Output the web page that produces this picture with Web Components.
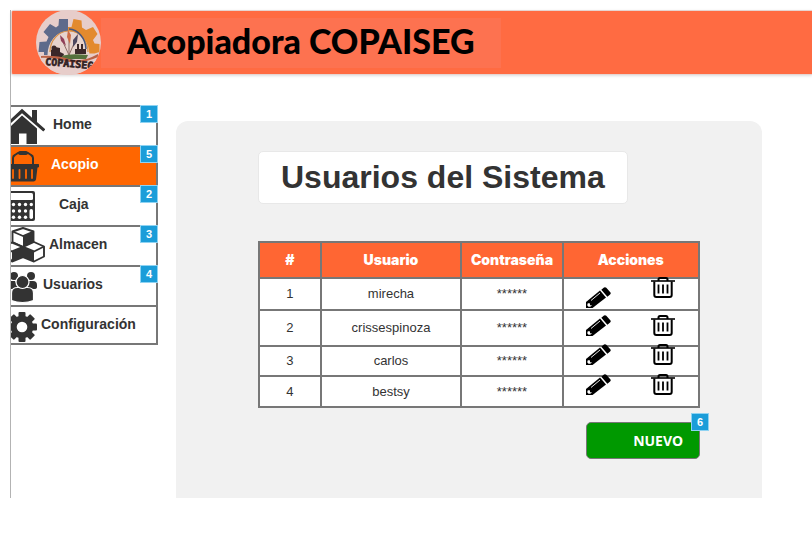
<!DOCTYPE html>
<html lang="es">
<head>
<meta charset="utf-8">
<title>Acopiadora COPAISEG</title>
<style>
  body { margin: 0; background: #fff; color: #333; font-family: "Liberation Sans", Arial, sans-serif; }
</style>
</head>
<body>
<copaiseg-app></copaiseg-app>

<script>
const define = (name, html, setup) => {
  const template = document.createElement('template');
  template.innerHTML = html;
  customElements.define(name, class extends HTMLElement {
    connectedCallback() {
      if (this.shadowRoot) return;
      this.attachShadow({ mode: 'open' }).append(template.content.cloneNode(true));
      if (setup) setup(this, this.shadowRoot);
    }
  });
};

const ICONS = {
  home: [34, `<g fill="#333"><path d="M-1 13 11 1.8l10 9V3h5v12l8.300 7.300-2 2.200L11 6.200-1 17z"/><path d="M0 19 11 8.500 26 21.500V37H15.500V26.500H8V37H0z"/></g>`],
  basket: [28, `<g fill="none" stroke="#333"><path d="M2 18v-7q0-2 2-3l3-2h10l3 2q2 1 2 3v7" stroke-width="2"/><path d="M9 6h6" stroke-width="4" stroke-linecap="round"/></g><path d="M-2 17h29q1.500 0 1.500 1.500T27 20.500h-.5L25 32.500q-.5 2-2.500 2H-1z" fill="#333"/><path d="M2 23v8M8.500 23v8M15 23v8M21 23v8" stroke="#f60" stroke-width="1.800" stroke-linecap="round"/>`],
  calculator: [24, `<path d="M0 4h22q2 0 2 2v26q0 2-2 2H0z" fill="#333"/><path d="M0 6h20.500q1.500 0 1.500 1.500v4q0 1.500-1.500 1.500H0z" fill="#fff"/><g fill="#fff"><circle cx="2.500" cy="17.500" r="1.700"/><circle cx="8.500" cy="17.500" r="1.700"/><circle cx="14.500" cy="17.500" r="1.700"/><circle cx="20.300" cy="17.500" r="1.700"/><circle cx="2.500" cy="24" r="1.700"/><circle cx="8.500" cy="24" r="1.700"/><circle cx="14.500" cy="24" r="1.700"/><circle cx="2.500" cy="30.200" r="1.700"/><circle cx="8.500" cy="30.200" r="1.700"/><circle cx="14.500" cy="30.200" r="1.700"/><rect x="18.500" y="22" width="3.500" height="10" rx="1.700"/></g>`],
  boxes: [34, `<g stroke="#333" stroke-width="1.900" stroke-linejoin="round" fill="#fff"><path d="M1.500 4.500 12 1l10.500 3.500v10L12 20 1.500 15z"/><path d="M-9.500 20 1 15.500 12 20v10L1 34.500z"/><path d="M12 20l11-5 10 4.500v10L23 34.500 12 30z"/><path d="M1.500 4.500 12 9l10.500-4.500M-9.500 20 1 24.500 12 20M12 20l11 4.500 10-5" fill="none"/></g><path d="M12 9l10.500-4.500v10L12 20z" fill="#333"/><path d="M1 24.500 12 20v10L1 34.500z" fill="#333"/><path d="M12 20l11 4.500v10L12 30z" fill="#333"/>`],
  users: [28, `<g fill="#333"><circle cx="3" cy="9" r="4"/><circle cx="20" cy="9" r="4"/><path d="M-4 22v-4q0-4 4-4h4l5 8zM16 14h6q4 0 4 4v2q0 2-3 2h-7z"/></g><g fill="#333" stroke="#fff" stroke-width="1.200"><path d="M.5 33.500V26q0-5.500 6-5.500h10q6 0 6 5.500v7.500q-5 2-11 2t-11-2z"/><circle cx="11.500" cy="15" r="6.500"/></g>`],
  gear: [26, `<g transform="translate(11 20)" fill="#333"><rect x="-3.500" y="-15" width="7" height="30" rx="1"/><rect x="-15" y="-3.500" width="30" height="7" rx="1"/><g transform="rotate(45)"><rect x="-3.500" y="-15" width="7" height="30" rx="1"/><rect x="-15" y="-3.500" width="30" height="7" rx="1"/></g><circle r="11.300"/><circle r="5.300" fill="#fff"/></g>`]
};

define('count-badge', `
<style>
  :host { display: block; box-sizing: border-box; width: 18px; height: 18px; border: 1px solid #8fd3f2;
    background: #1b9dd9; color: #fff; font: bold 11px/16px "Liberation Sans", Arial, sans-serif; text-align: center; }
</style><slot></slot>`);

define('brand-logo', `
<style>:host { display: block; width: 65px; height: 65px; flex: none; } svg { display: block; width: 100%; height: 100%; }</style>
<svg viewBox="0 0 65 65" role="img" aria-label="Logo">
  <defs><clipPath id="disc"><circle cx="32.500" cy="32.500" r="32.500"/></clipPath></defs>
  <g clip-path="url(#disc)">
    <rect width="65" height="65" fill="#e7cdca"/>
    <path d="M32 9v36H8V42H2.500l1-10 7-.5 2-4.500-5-5 6.500-8 6 3.500 2.500-2 .5-6.500z" fill="#5e6a8b"/>
    <path d="M32 17h3.500l2-8 8 1.500.5 7 4 2.500 7-3 4.500 7-4.500 6 1.500 3.500 5 .5v8l-5 1.500H32z" fill="#e38a2e"/>
    <path d="M11.500 45a21 24 0 0 1 42 0z" fill="#e7d3cd"/>
    <path d="M14 42a19 21 0 0 1 38 0" fill="none" stroke="#d99045" stroke-width="1.200"/>
    <path d="M33 19a18 21 0 0 1 17 20" fill="none" stroke="#46557c" stroke-width="1.500"/>
    <path d="M33 45 25 28M33 45V26M33 45l7-16" stroke="#8d6c65" stroke-width="1"/>
    <path d="M24 25l4 4 2 7-5-5z" fill="#913f58"/><path d="M32 20l3 5-1 9-3-7z" fill="#cf6c43"/><path d="M42 24l-1 8-4 5 0-7z" fill="#4d475f"/>
    <path d="M15 40l4-3 5 1v4l4 2-1 3-12 1z" fill="#3a2729"/><circle cx="18" cy="38" r="2.500" fill="#3a2729"/>
    <path d="M39 44v-5h2v-5h2v5h2v-5h2v5h3v5z" fill="#3a2729"/>
    <path d="M26 46q8-3 26-1l-2 4-24 0z" fill="#55713d"/>
    <path d="M5 46q15-1 28 3t29-5v3q-15 7-29 5T5 48z" fill="#bb6245"/>
    <path d="M2 48q16-1 30 4t31-5v20H2z" fill="#e7cdca"/>
    <text x="9" y="55" transform="rotate(5 9 55)" font-family="DejaVu Sans Mono, monospace" font-weight="bold" font-size="10" fill="#302022" stroke="#302022" stroke-width=".6">COPAISEG</text>
  </g>
</svg>`);

define('app-header', `
<style>
  :host { display: flex; align-items: center; height: 65px; background: linear-gradient(#ff6b42, #ff6b42) 0 1px / 100% 63px no-repeat #e6d5d2;
    border-left: 1px solid #e9cfc9; border-radius: 3px 0 0 3px; box-shadow: 0 1px 3px #0002; }
  brand-logo { margin-left: 24px; }
  h1 { box-sizing: border-box; width: 400px; margin: 0; padding: 0 0 4px 26px; background: #fd7250; color: #000;
    font: 900 34px/46px Lato, sans-serif; white-space: nowrap; }
</style>
<brand-logo></brand-logo><h1><slot></slot></h1>`);

define('nav-item', `
<style>
  :host { display: block; position: relative; border: solid #777; border-width: 2px 2px 0 0; }
  :host([last]) { border-bottom-width: 2px; }
  a { display: flex; height: 38px; color: #333; font: bold 14px/34px "Liberation Sans", Arial, sans-serif; text-decoration: none; }
  :host([last]) a { height: 36px; }
  :host([active]) a { background: #f60; color: #fff; }
  svg { flex: none; height: 38px; overflow: hidden; }
  :host([gap="s"]) a { gap: 4px; } :host([gap="m"]) a { gap: 8px; }
  :host([gap="l"]) a { gap: 12px; } :host([gap="xl"]) a { gap: 24px; }
  count-badge { position: absolute; top: -2px; right: -2px; }
</style>
<a href="#"><svg aria-hidden="true"></svg><slot></slot></a>`, (host, root) => {
  const [width, art] = ICONS[host.getAttribute('icon')];
  const svg = root.querySelector('svg');
  svg.setAttribute('width', width);
  svg.setAttribute('viewBox', `0 0 ${width} 38`);
  svg.innerHTML = art;
  if (host.hasAttribute('count')) {
    const badge = document.createElement('count-badge');
    badge.textContent = host.getAttribute('count');
    root.append(badge);
  }
});

define('side-nav', `
<style>:host { display: block; flex: none; width: 147px; }</style>
<nav><slot></slot></nav>`);

define('pencil-button', `
<style>:host { display: block; } button { display: block; padding: 0; border: 0; background: none; } svg { display: block; }</style>
<button type="button" aria-label="Editar"><svg width="25" height="21" viewBox="0 0 25 21">
  <path d="M0 21v-6L14 3.500l6 7L6.500 21z"/><path d="M15.300 2.700 18 .6q1.200-1 2.300.2l4 4.500q1 1.200-.2 2.200l-2.700 2.200z"/>
  <path d="M1.800 16.200l2 .1.300 2 2 .2-2 1.300H2.500l-1.300-1.500z" fill="#fff"/><path d="M5 13.500 14 6" stroke="#fff" stroke-width=".9"/>
</svg></button>`);

define('trash-button', `
<style>:host { display: block; } button { display: block; padding: 0; border: 0; background: none; } svg { display: block; }</style>
<button type="button" aria-label="Eliminar"><svg width="24" height="21" viewBox="0 0 24 21" fill="none" stroke="#000" stroke-width="2">
  <path d="M0 4h24" stroke-width="1.600"/><path d="M7.500 4V2.500Q7.500 1 9 1h6q1.500 0 1.500 1.500V4"/>
  <path d="M3.300 4.500V18q0 2 2 2h13.400q2 0 2-2V4.500"/><path d="M7.500 7.500v9M12 7.500v9M16.500 7.500v9" stroke-width="1.800"/>
</svg></button>`);

define('user-table', `
<style>
  :host { display: block; }
  table { width: 100%; border-collapse: collapse; table-layout: fixed; background: #fff; }
  th, td { box-sizing: border-box; padding: 0; border: 2px solid #777; text-align: center; }
  th { height: 36px; background: #f63; color: #fff; font: 900 14px/16px Inter, sans-serif; }
  td { font-size: 13px; line-height: 16px; }
  .n { width: 14%; } .u { width: 32%; } .p { width: 23%; } .a { width: 31%; }
  .tall td { height: 36px; } .mid td { height: 32px; } .low td { height: 30px; }
  .low:last-child td { height: 31px; }
  .actions { position: relative; }
  /* the action icons lie over the row borders */
  pencil-button, trash-button { position: absolute; top: -3px; }
  pencil-button { left: 17%; } trash-button { right: 17%; }
  .tall pencil-button, .tall trash-button { top: 4px; }
  .mid pencil-button { top: 8px; }
  .mid trash-button { top: -2px; }
</style>
<table>
  <thead><tr><th class="n">#</th><th class="u">Usuario</th><th class="p">Contraseña</th><th class="a">Acciones</th></tr></thead>
  <tbody></tbody>
</table>`, (host, root) => {
  const rows = [['mirecha', 'mid'], ['crissespinoza', 'tall'], ['carlos', 'low'], ['bestsy', 'low']];
  root.querySelector('tbody').innerHTML = rows.map(([name, size], i) =>
    `<tr class="${size}"><td>${i + 1}</td><td>${name}</td><td>******</td><td class="actions"><pencil-button></pencil-button><trash-button></trash-button></td></tr>`).join('');
});

define('new-button', `
<style>
  :host { display: block; position: relative; width: 114px; }
  button { display: block; width: 100%; height: 37px; padding: 0 16px; border: 1px solid #777; border-radius: 5px; background: #090;
    color: #fff; font: bold 14px/35px "Noto Sans", sans-serif; text-align: right; }
  count-badge { position: absolute; top: -9px; right: -9px; }
</style>
<button type="button"><slot></slot></button><count-badge>6</count-badge>`);

define('content-panel', `
<style>
  :host { display: flex; flex-direction: column; flex: 1; box-sizing: border-box; padding: 30px 62px 39px 82px;
    border-radius: 12px 12px 0 0; background: #f1f1f1; }
  h2 { align-self: flex-start; margin: 0 0 37px; padding: 0 22px; border: 1px solid #e8e8e8; border-radius: 5px;
    background: #fff; font-size: 32px; line-height: 51px; white-space: nowrap; }
  new-button { align-self: flex-end; margin-top: 14px; }
</style>
<h2>Usuarios del Sistema</h2><user-table></user-table><new-button>NUEVO</new-button>`);

define('copaiseg-app', `
<style>
  :host { display: flex; flex-direction: column; box-sizing: border-box; min-height: calc(100vh - 65px); margin: 10px 0 55px 10px;
    border-left: 1px solid #b3b3b3; }
  main { display: flex; flex: 1; gap: 18px; padding-right: 50px; }
  side-nav { margin-top: 30px; }
  content-panel { margin-top: 46px; }
</style>
<app-header>Acopiadora COPAISEG</app-header>
<main>
  <side-nav>
    <nav-item icon="home" gap="m" count="1">Home</nav-item>
    <nav-item icon="basket" gap="l" count="5" active>Acopio</nav-item>
    <nav-item icon="calculator" gap="xl" count="2">Caja</nav-item>
    <nav-item icon="boxes" gap="s" count="3">Almacen</nav-item>
    <nav-item icon="users" gap="s" count="4">Usuarios</nav-item>
    <nav-item icon="gear" gap="s" last>Configuración</nav-item>
  </side-nav>
  <content-panel></content-panel>
</main>`);
</script>
</body>
</html>
